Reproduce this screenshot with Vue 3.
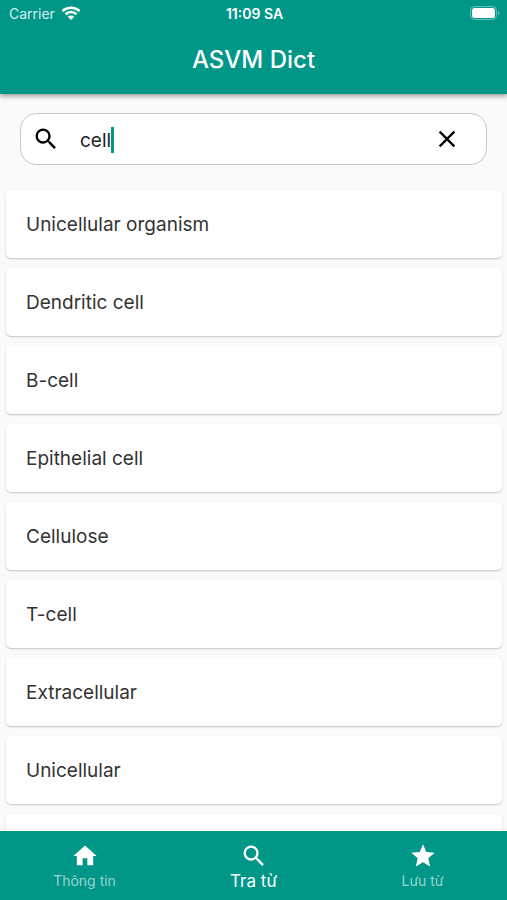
<template>
  <div class="app">
    <header class="app-header">
      <div class="status-bar">
        <div class="status-left">
          <span>Carrier</span>
          <svg class="wifi" viewBox="0 0 20 14" aria-hidden="true">
            <path d="M1.400 5.100C6.200.6 13.800.6 18.600 5.100" />
            <path d="M4.500 8.200c3.100-2.900 7.900-2.900 11 0" />
            <path class="dot" d="M10 14 6.700 10.700c1.900-1.600 4.700-1.600 6.600 0z" />
          </svg>
        </div>
        <span class="status-time">11:09 SA</span>
        <div class="status-right">
          <svg class="battery" viewBox="0 0 30 14" aria-hidden="true">
            <rect class="shell" x="0.5" y="0.5" width="26" height="13" rx="4" />
            <rect x="2" y="2" width="23" height="10" rx="2.5" />
            <path class="cap" d="M28 4.800c1.900.7 1.900 3.700 0 4.400z" />
          </svg>
        </div>
      </div>
      <h1 class="title">ASVM Dict</h1>
    </header>

    <main class="content">
      <div class="search-box">
        <label class="search-label" for="search" aria-label="Search">
          <svg viewBox="0 0 24 24" aria-hidden="true"><path :d="icons.search" /></svg>
        </label>
        <div class="search-field">
          <input id="search" v-model="keyword" class="search-input" type="text" size="2" autocomplete="off" />
          <span class="caret"></span>
        </div>
        <button class="clear-btn" type="button" aria-label="Clear" @click="keyword = ''">
          <svg viewBox="0 0 24 24" aria-hidden="true"><path :d="icons.close" /></svg>
        </button>
      </div>

      <ul class="word-list">
        <li v-for="word in results" :key="word" class="word-card">{{ word }}</li>
        <li class="word-card"></li>
      </ul>
    </main>

    <nav class="tab-bar">
      <button
        v-for="tab in tabs"
        :key="tab.key"
        type="button"
        :class="['tab', { active: activeTab === tab.key }]"
        @click="activeTab = tab.key"
      >
        <svg viewBox="0 0 24 24" aria-hidden="true"><path :d="icons[tab.icon]" /></svg>
        <span class="tab-label">{{ tab.label }}</span>
      </button>
    </nav>
  </div>
</template>

<script setup>
import { ref, computed } from 'vue'

const icons = {
  search: 'M15.5 14h-.79l-.28-.27A6.470 6.470 0 0 0 16 9.500 6.500 6.500 0 1 0 9.500 16c1.610 0 3.090-.59 4.230-1.570l.27.28v.79l5 4.990L20.490 19zm-6 0a4.500 4.500 0 1 1 0-9 4.500 4.500 0 0 1 0 9z',
  close: 'M19 6.410 17.590 5 12 10.590 6.410 5 5 6.410 10.590 12 5 17.590 6.410 19 12 13.410 17.590 19 19 17.590 13.410 12z',
  home: 'M10 20v-6h4v6h5v-8h3L12 3 2 12h3v8z',
  star: 'M12 17.270 18.180 21l-1.640-7.030L22 9.240l-7.190-.61L12 2 9.190 8.630 2 9.240l5.460 4.730L5.820 21z'
}

const words = [
  'Unicellular organism',
  'Dendritic cell',
  'B-cell',
  'Epithelial cell',
  'Cellulose',
  'T-cell',
  'Extracellular',
  'Unicellular'
]

const tabs = [
  { key: 'info', label: 'Thông tin', icon: 'home' },
  { key: 'search', label: 'Tra từ', icon: 'search' },
  { key: 'saved', label: 'Lưu từ', icon: 'star' }
]

const keyword = ref('cell')
const activeTab = ref('search')

const results = computed(() =>
  words.filter((word) => word.toLowerCase().includes(keyword.value.toLowerCase()))
)
</script>

<style>
body {
  margin: 0;
}
</style>

<style scoped>
.app {
  display: flex;
  flex-direction: column;
  height: 100vh;
  overflow: hidden;
  background: #fafafa;
  color: #333;
  font-family: Inter, 'Noto Sans', sans-serif;
}

.app-header {
  position: relative;
  flex: none;
  background: #009688;
  color: #fff;
  box-shadow: 0 2px 5px rgba(0, 0, 0, 0.4);
}

.status-bar {
  display: grid;
  grid-template-columns: 1fr auto 1fr;
  align-items: center;
  height: 26px;
  padding: 0 7px 0 9px;
  font-size: 14px;
}

.status-left {
  display: flex;
  align-items: center;
  gap: 6px;
  color: #d5efec;
}

.wifi {
  width: 20px;
  height: 14px;
  fill: none;
  stroke: #fff;
  stroke-width: 2.6;
}

.wifi .dot {
  fill: #fff;
  stroke: none;
}

.status-time {
  font-weight: 600;
}

.status-right {
  display: flex;
  justify-content: flex-end;
}

.battery {
  width: 30px;
  height: 14px;
  fill: #fff;
}

.battery .shell {
  fill: none;
  stroke: #66c0b8;
}

.battery .cap {
  fill: #66c0b8;
}

.title {
  margin: 0;
  font-size: 24px;
  font-weight: 500;
  line-height: 68px;
  text-align: center;
}

.content {
  flex: 1;
  min-height: 0;
  overflow: hidden;
}

.search-box {
  display: flex;
  align-items: center;
  box-sizing: border-box;
  height: 52px;
  margin: 19px 20px 25px;
  padding: 0 25px 0 11px;
  border: 1px solid #c8c8c8;
  border-radius: 16px;
  background: #fff;
}

.search-label,
.clear-btn {
  display: flex;
  flex: none;
}

.search-box svg {
  width: 28px;
  height: 28px;
  fill: #000;
}

.clear-btn {
  padding: 0;
  border: 0;
  background: none;
  cursor: pointer;
}

.search-field {
  display: flex;
  flex: 1;
  align-items: center;
  min-width: 0;
  padding: 2px 0 0 20px;
}

.search-input {
  field-sizing: content;
  min-width: 1px;
  max-width: 100%;
  padding: 0;
  border: 0;
  outline: 0;
  background: none;
  color: #222;
  font-family: inherit;
  font-size: 19px;
}

.caret {
  flex: none;
  width: 3px;
  height: 26px;
  background: #009688;
}

.word-list {
  display: flex;
  flex-direction: column;
  gap: 10px;
  margin: 0;
  padding: 0 5px 0 6px;
  list-style: none;
}

.word-card {
  box-sizing: border-box;
  min-height: 68px;
  padding: 2px 20px 0;
  border-radius: 5px;
  background: #fff;
  box-shadow: 0 1px 2px rgba(0, 0, 0, 0.22);
  font-size: 19px;
  line-height: 66px;
}

.tab-bar {
  display: flex;
  flex: none;
  height: 69px;
  background: #009688;
}

.tab {
  display: flex;
  flex: 1;
  flex-direction: column;
  align-items: center;
  padding: 11px 0 0;
  border: 0;
  background: none;
  color: #99d5cf;
  font-family: inherit;
  font-size: 14px;
  cursor: pointer;
}

.tab svg {
  width: 28px;
  height: 28px;
  fill: #fff;
}

.tab-label {
  line-height: 22px;
}

.tab.active {
  color: #fff;
  font-size: 17px;
}
</style>
